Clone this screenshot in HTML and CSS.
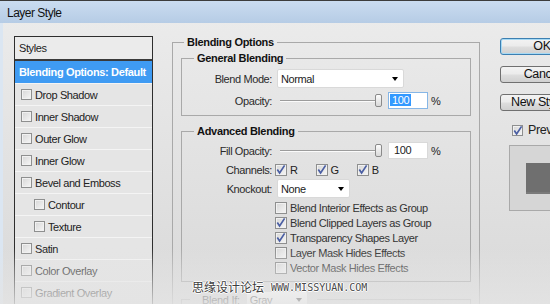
FILE: index.html
```html
<!DOCTYPE html>
<html lang="en">

<head>
    <meta charset="UTF-8">
    <title>Layer Style</title>
    <link rel="stylesheet" href="styles.css">
</head>

<body>
    <div class="window">
        <div class="titlebar">Layer Style</div>

        <div class="content">
            <div class="styles-panel">
                <div class="panel-head">Styles</div>
                <div class="style-row active">Blending Options: Default</div>
                <div class="style-row"><span class="cb"></span>Drop Shadow</div>
                <div class="style-row"><span class="cb"></span>Inner Shadow</div>
                <div class="style-row"><span class="cb"></span>Outer Glow</div>
                <div class="style-row"><span class="cb"></span>Inner Glow</div>
                <div class="style-row"><span class="cb"></span>Bevel and Emboss</div>
                <div class="style-row sub"><span class="cb"></span>Contour</div>
                <div class="style-row sub"><span class="cb"></span>Texture</div>
                <div class="style-row"><span class="cb"></span>Satin</div>
                <div class="style-row"><span class="cb"></span>Color Overlay</div>
                <div class="style-row"><span class="cb"></span>Gradient Overlay</div>
            </div>

            <div class="options">
                <fieldset class="group outer">
                    <legend class="outer-title">Blending Options</legend>

                    <fieldset class="group general">
                        <legend>General Blending</legend>
                        <div class="row select-row">
                            <span class="label">Blend Mode:</span>
                            <div class="select mode"><span>Normal</span><i class="arrow"></i></div>
                        </div>
                        <div class="row num-row">
                            <span class="label">Opacity:</span>
                            <div class="slider"><span class="track"></span><span class="thumb"></span></div>
                            <div class="num focus"><span class="sel">100</span></div>
                            <span class="pct">%</span>
                        </div>
                    </fieldset>

                    <fieldset class="group advanced">
                        <legend>Advanced Blending</legend>
                        <div class="row num-row">
                            <span class="label">Fill Opacity:</span>
                            <div class="slider"><span class="track"></span><span class="thumb"></span></div>
                            <div class="num">100</div>
                            <span class="pct">%</span>
                        </div>
                        <div class="row channels">
                            <span class="label">Channels:</span>
                            <span class="channel"><span class="cb on"><svg viewBox="0 0 12 12" width="12" height="12"><path d="M2.3 5.6 L4.6 9 L9.6 1.4" fill="none" stroke="#4a5ea3" stroke-width="1.7"/></svg></span>R</span>
                            <span class="channel"><span class="cb on"><svg viewBox="0 0 12 12" width="12" height="12"><path d="M2.3 5.6 L4.6 9 L9.6 1.4" fill="none" stroke="#4a5ea3" stroke-width="1.7"/></svg></span>G</span>
                            <span class="channel"><span class="cb on"><svg viewBox="0 0 12 12" width="12" height="12"><path d="M2.3 5.6 L4.6 9 L9.6 1.4" fill="none" stroke="#4a5ea3" stroke-width="1.7"/></svg></span>B</span>
                        </div>
                        <div class="row select-row knock">
                            <span class="label">Knockout:</span>
                            <div class="select knockout"><span>None</span><i class="arrow"></i></div>
                        </div>
                        <div class="checks">
                            <div class="check"><span class="cb"></span>Blend Interior Effects as Group</div>
                            <div class="check"><span class="cb on"><svg viewBox="0 0 12 12" width="12" height="12"><path d="M2.3 5.6 L4.6 9 L9.6 1.4" fill="none" stroke="#4a5ea3" stroke-width="1.7"/></svg></span>Blend Clipped Layers as Group</div>
                            <div class="check"><span class="cb on"><svg viewBox="0 0 12 12" width="12" height="12"><path d="M2.3 5.6 L4.6 9 L9.6 1.4" fill="none" stroke="#4a5ea3" stroke-width="1.7"/></svg></span>Transparency Shapes Layer</div>
                            <div class="check"><span class="cb"></span>Layer Mask Hides Effects</div>
                            <div class="check"><span class="cb"></span>Vector Mask Hides Effects</div>
                        </div>
                    </fieldset>

                    <fieldset class="group blend-if">
                        <legend><span class="blend-label">Blend If:</span><span class="select gray"><span>Gray</span><i class="arrow"></i></span></legend>
                    </fieldset>
                </fieldset>
            </div>

            <div class="side">
                <div class="btn default">OK</div>
                <div class="btn">Cancel</div>
                <div class="btn">New Style...</div>
                <div class="preview-check">
                    <span class="cb on"><svg viewBox="0 0 12 12" width="12" height="12"><path d="M2.3 5.6 L4.6 9 L9.6 1.4" fill="none" stroke="#4a5ea3" stroke-width="1.7"/></svg></span>Preview
                </div>
                <div class="preview-box">
                    <div class="swatch"></div>
                </div>
            </div>
        </div>

        <div class="fade"></div>
        <div class="watermark"><span class="wm-cn">思缘设计论坛</span><span class="wm-url">WWW.MISSYUAN.COM</span></div>
    </div>
</body>
</html>
```

FILE: styles.css
```css
* {
    box-sizing: border-box;
}

body {
    margin: 0;
    font-family: "Liberation Sans", Arial, sans-serif;
    font-size: 11px;
    letter-spacing: -0.4px;
    color: #222;
}

.window {
    position: relative;
    width: 550px;
    height: 304px;
    overflow: hidden;
    border-top: 1px solid #3c3c3c;
    background: linear-gradient(#ececec, #d9d9d9);
}

.titlebar {
    height: 22px;
    padding: 1px 0 0 7px;
    line-height: 22px;
    font-size: 12px;
    letter-spacing: -0.5px;
    color: #111;
    background: linear-gradient(#cadcf0, #b6cce5);
}

.content {
    display: flex;
    align-items: flex-start;
    height: 281px;
    border-left: 3px solid #dbe6f2;
    padding-left: 11px;
}

/* Styles list */
.styles-panel {
    flex: none;
    width: 139px;
    height: 300px;
    margin-top: 13px;
    border: 1px solid #2e2e2e;
    background: #e5e5e5;
}

.panel-head {
    height: 24px;
    padding: 0 0 0 4px;
    line-height: 22px;
    background: #ebebeb;
    border-bottom: 2px solid #3a3a3a;
}

.style-row {
    display: flex;
    align-items: center;
    height: 22px;
    padding-left: 6px;
    border-top: 1px solid #f4f4f4;
}

.style-row.sub {
    padding-left: 19px;
}

.style-row.active {
    padding-left: 4px;
    border-top: none;
    background: #3f9bf3;
    color: #fff;
    font-weight: bold;
    letter-spacing: -0.35px;
}

.style-row .cb {
    width: 11px;
    height: 11px;
    margin-right: 3px;
}

/* checkbox */
.cb {
    flex: none;
    display: inline-block;
    width: 12px;
    height: 12px;
    border: 1px solid #8e8f8f;
    background: linear-gradient(135deg, #d6d6d6, #f6f6f6);
    box-shadow: inset 0 0 0 1px #f1f1f1;
    overflow: visible;
}

.cb svg {
    display: block;
    margin: -1px 0 0 -1px;
}

/* Options column */
.options {
    flex: none;
    width: 308px;
    margin: 12px 0 0 19px;
}

fieldset.group {
    margin: 0;
    padding: 0;
    min-width: 0;
    border: 1px solid #a9a9a9;
}

fieldset legend {
    padding: 0 3px;
    margin-left: 12px;
    line-height: 14px;
    font-weight: bold;
    color: #111;
    letter-spacing: -0.3px;
}

.outer {
    height: 330px;
    padding: 2px 8px 0 8px !important;
}

.outer > legend.outer-title {
    margin-left: 3px;
}

.general {
    padding-bottom: 6px !important;
}

.advanced {
    margin-top: 8px !important;
    padding-bottom: 6px !important;
}

.row {
    display: flex;
    align-items: center;
}

.label {
    flex: none;
    width: 90px;
    margin-right: 5px;
    text-align: right;
    color: #2a2a2a;
}

.select-row {
    height: 19px;
    margin-top: 4px;
}

.num-row {
    height: 17px;
    margin-top: 4px;
}

.select {
    display: flex;
    align-items: center;
    justify-content: space-between;
    height: 19px;
    padding: 0 5px 0 3px;
    background: #fff;
    border: 1px solid #d9d9d9;
    border-radius: 2px;
}

.select.mode {
    width: 127px;
}

.select.knockout {
    width: 73px;
}

.arrow {
    width: 0;
    height: 0;
    border-left: 3.5px solid transparent;
    border-right: 3.5px solid transparent;
    border-top: 4px solid #000;
}

.slider {
    display: flex;
    align-items: center;
    width: 102px;
    height: 14px;
    margin-left: 3px;
}

.track {
    flex: 1;
    border-top: 1px solid #9c9c9c;
    border-bottom: 1px solid #fbfbfb;
}

.thumb {
    width: 7px;
    height: 13px;
    border: 1px solid #8a8a8a;
    border-radius: 2px;
    background: linear-gradient(#fdfdfd, #d9d9d9);
}

.num {
    width: 40px;
    height: 17px;
    margin-left: 6px;
    padding-left: 5px;
    line-height: 15px;
    background: #fff;
    border: 1px solid #d9d9d9;
}

.num.focus {
    padding-left: 1px;
    border-color: #86b6e6;
}

.sel {
    padding: 0 2px;
    background: #3399ff;
    color: #fff;
}

.pct {
    margin-left: 3px;
}

.channels {
    height: 13px;
    margin-top: 4px;
}

.channel {
    display: flex;
    align-items: center;
    margin-left: -2px;
    margin-right: 13px;
}

.channel .cb {
    margin-right: 3px;
}

.channel + .channel {
    margin-left: 5px;
}

.knock {
    margin-top: 3px;
}

.checks {
    margin-top: 2px;
    padding-left: 93px;
}

.check {
    display: flex;
    align-items: center;
    height: 15px;
    color: #333;
}

.check .cb {
    margin-right: 3px;
}

.blend-if {
    height: 40px;
    margin-top: 9px !important;
}

.blend-if legend {
    display: flex;
    align-items: center;
    margin-left: 8px;
    padding: 0 9px 0 12px;
    font-weight: normal;
}

.select.gray {
    width: 62px;
    height: 17px;
    margin-left: 6px;
}

/* right column */
.side {
    flex: none;
    width: 84px;
    margin-left: 20px;
    padding-top: 15px;
}

.btn {
    width: 84px;
    height: 17px;
    margin-bottom: 11px;
    border: 1px solid #707070;
    border-radius: 3px;
    background: linear-gradient(#f3f3f3 0%, #ebebeb 48%, #dedede 52%, #d0d0d0 100%);
    font-size: 12.5px;
    line-height: 15px;
    text-align: center;
    color: #111;
}

.btn.default {
    border-color: #3c7fb1;
    box-shadow: inset 0 0 0 1px #a6d9f4;
}

.preview-check {
    display: flex;
    align-items: center;
    height: 16px;
    margin-top: 6px;
    padding-left: 12px;
    font-size: 12.5px;
}

.preview-check .cb {
    width: 11px;
    height: 11px;
    margin-right: 5px;
}

.preview-box {
    width: 70px;
    height: 66px;
    margin: 7px 0 0 9px;
    padding: 17px 0 0 16px;
    background: #d6d6d6;
    border: 1px solid #a9a9a9;
}

.swatch {
    width: 60px;
    height: 31px;
    background: #6f6f6f;
    border-bottom: 2px solid #7a7a7a;
}

/* bottom fade + watermark lie over the dialog */
.fade {
    position: absolute;
    left: 0;
    right: 0;
    bottom: 0;
    height: 56px;
    pointer-events: none;
    background: linear-gradient(rgba(228, 228, 228, 0), rgba(228, 228, 228, 0.4) 40%, rgba(228, 228, 228, 0.85));
}

.watermark {
    position: absolute;
    left: 192px;
    top: 278px;
    display: flex;
    align-items: center;
    color: #3d3d3d;
    letter-spacing: 0;
    text-shadow: 1px 0 0 #fff, -1px 0 0 #fff, 0 1px 0 #fff, 0 -1px 0 #fff;
}

.wm-cn {
    font-family: "Noto Sans CJK SC", sans-serif;
    font-size: 12px;
    line-height: 16px;
}

.wm-url {
    margin-left: 7px;
    font-family: "DejaVu Sans Mono", monospace;
    font-size: 10px;
    color: #4a4a4a;
}
```
